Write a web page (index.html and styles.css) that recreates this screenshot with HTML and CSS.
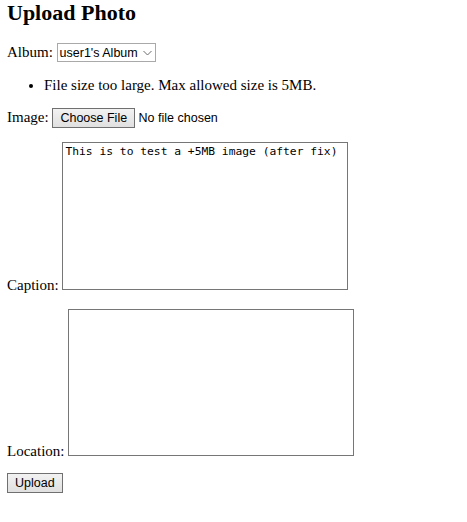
FILE: index.html
```html
<!DOCTYPE html>
<html>
<head>
<meta charset="utf-8">
<link rel="stylesheet" href="styles.css">
</head>
<body>
<h1 class="title">Upload Photo</h1>
<form class="form">
  <p class="row">Album: <span class="select">user1's Album<svg class="chev" width="9" height="6" viewBox="0 0 9 6"><path d="M0.5 1 L4.5 5 L8.5 1" fill="none" stroke="#6d6d6d" stroke-width="1"/></svg></span></p>
  <ul class="errors"><li>File size too large. Max allowed size is 5MB.</li></ul>
  <p class="row row-tight">Image: <span class="file"><span class="btn">Choose File</span> No file chosen</span></p>
  <p class="row row-tight">Caption: <textarea class="area">This is to test a +5MB image (after fix)</textarea></p>
  <p class="row row-loc">Location: <textarea class="area area-short"></textarea></p>
  <p class="row row-submit"><button type="button" class="btn">Upload</button></p>
</form>
</body>
</html>
```
FILE: styles.css
```css
body {
  margin: 0 7px 7px 7px;
  font-family: "Liberation Serif", serif;
  font-size: 15px;
  color: #000;
  background: #fff;
}
.title {
  font-size: 22px;
  font-weight: bold;
  margin: 0 0 17px 0;
}
.row {
  margin: 15px 0;
}
.row-tight {
  margin: 14px 0;
}
.row-loc {
  margin: 15px 0 13px 0;
}
.row-submit {
  margin: 13px 0;
}
.errors {
  margin: 14px 0;
  padding-left: 37px;
}
.select {
  display: inline-flex;
  align-items: center;
  gap: 5px;
  white-space: nowrap;
  box-sizing: border-box;
  height: 19px;
  vertical-align: baseline;
  font-family: "Liberation Sans", Arial, sans-serif;
  font-size: 12.5px;
  border: 1px solid #a9a9a9;
  background: #fff;
  color: #000;
  padding: 0 3px 0 2px;
}
.file {
  font-family: "Liberation Sans", Arial, sans-serif;
  font-size: 12.5px;
}
.btn {
  display: inline-block;
  box-sizing: border-box;
  height: 20px;
  font-family: "Liberation Sans", Arial, sans-serif;
  font-size: 12.5px;
  color: #000;
  background: linear-gradient(#f2f2f2, #e0e0e0);
  border: 1px solid #707070;
  border-radius: 0;
  line-height: 18px;
  padding: 0 7px;
  margin: 0;
}
.area {
  box-sizing: border-box;
  width: 286px;
  height: 148px;
  font-family: "DejaVu Sans Mono", monospace;
  font-size: 11.3px;
  border: 1px solid #767676;
  padding: 2px;
  margin: 0;
  vertical-align: baseline;
  resize: none;
}
.area-short {
  height: 147px;
}
```
